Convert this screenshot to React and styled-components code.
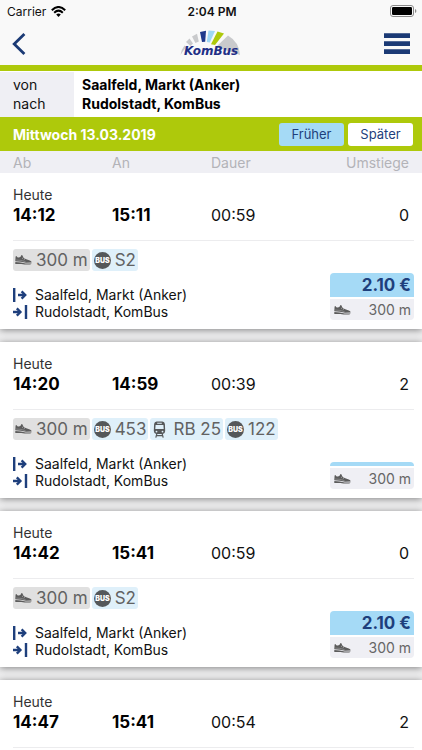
import styled, { createGlobalStyle } from 'styled-components';

const connections = [
  {
    departure: '14:12', arrival: '15:11', duration: '00:59', changes: 0, price: '2.10 €',
    legs: [{ type: 'walk', label: '300 m' }, { type: 'bus', label: 'S2' }],
  },
  {
    departure: '14:20', arrival: '14:59', duration: '00:39', changes: 2, price: '',
    legs: [
      { type: 'walk', label: '300 m' },
      { type: 'bus', label: '453' },
      { type: 'train', label: 'RB 25' },
      { type: 'bus', label: '122' },
    ],
  },
  {
    departure: '14:42', arrival: '15:41', duration: '00:59', changes: 0, price: '2.10 €',
    legs: [{ type: 'walk', label: '300 m' }, { type: 'bus', label: 'S2' }],
  },
  {
    departure: '14:47', arrival: '15:41', duration: '00:54', changes: 2, price: '',
    legs: [
      { type: 'walk', label: '300 m' },
      { type: 'bus', label: '453' },
      { type: 'train', label: 'RB 25' },
      { type: 'bus', label: '122' },
    ],
  },
];

const from = 'Saalfeld, Markt (Anker)';
const to = 'Rudolstadt, KomBus';

function ShoeIcon() {
  return (
    <svg width="17" height="10" viewBox="0 0 17 10" fill="#5c5c5c" aria-hidden="true">
      <path d="M0.6 1.4 L1.4 1 L2.4 2.2 Q4 3 5.8 1.6 L6.4 0 L7.6 0.4 L8 1.8 L9.6 3.4 L12 4.6 L14.8 5.4 Q16.6 6 16.7 7.6 L11 7.7 L6 6.7 L0.3 6.2 Z" />
      <path d="M0.3 6.9 L5.8 7.4 L10.6 8.5 L16.6 8.5 Q16.2 9.6 14.6 9.6 L9.6 9.6 L6.4 8.9 L0.3 8.9 Z" />
      <path d="M7.2 3.6 L8.6 2.4 M8.8 4.7 L10.2 3.5" stroke="#e4e4e6" strokeWidth="0.6" />
      <path d="M1.2 5 L6 5.4 L10.5 6.6" fill="none" stroke="#a8a8aa" strokeWidth="0.5" />
    </svg>
  );
}

function BusIcon() {
  return (
    <svg width="17" height="17" viewBox="0 0 17 17" aria-hidden="true">
      <circle cx="8.5" cy="8.5" r="8.5" fill="#55585a" />
      <text x="8.5" y="11" textAnchor="middle" fontSize="7" fontWeight="900" fontFamily="Inter, sans-serif" fill="#fff">BUS</text>
    </svg>
  );
}

function TrainIcon() {
  return (
    <svg width="17" height="17" viewBox="-1 0 17 17" aria-hidden="true">
      <path d="M3.6 0.5 H9.4 Q11.6 0.7 11.9 3 L12.2 10 Q12.1 12.6 9.8 12.9 H3.2 Q0.9 12.6 0.8 10 L1.1 3 Q1.4 0.7 3.6 0.5 Z" fill="#55585a" />
      <path d="M4.2 1.7 H8.8 V2.7 H4.2 Z M2.6 4 H10.4 L10.7 8 H2.3 Z" fill="#dff0fa" />
      <circle cx="3.5" cy="10.6" r="0.9" fill="#dff0fa" />
      <circle cx="9.5" cy="10.6" r="0.9" fill="#dff0fa" />
      <path d="M3.8 12.8 L2.8 16.6 M9.2 12.8 L10.2 16.6 M3.3 14.7 H9.7" stroke="#55585a" strokeWidth="1.2" />
    </svg>
  );
}

function DepartIcon() {
  return (
    <svg width="15" height="14" viewBox="0 0 15 14" fill="none" stroke="#1e3f7c" strokeWidth="2.4" aria-hidden="true">
      <path d="M1.2 0 V14 M5 7 H12" />
      <path d="M8.6 3.4 L12.2 7 L8.6 10.6" />
    </svg>
  );
}

function ArriveIcon() {
  return (
    <svg width="15" height="14" viewBox="0 0 15 14" fill="none" stroke="#1e3f7c" strokeWidth="2.4" aria-hidden="true">
      <path d="M13 0 V14 M0 7 H7" />
      <path d="M3.8 3.4 L7.4 7 L3.8 10.6" />
    </svg>
  );
}

function WifiIcon() {
  return (
    <svg width="15" height="11" viewBox="0 0 15 11" aria-hidden="true">
      <g fill="none" stroke="#000" strokeWidth="2">
        <path d="M0.8 4.2 Q7.5 -2.2 14.2 4.2" />
        <path d="M3.2 6.7 Q7.5 2.6 11.8 6.7" />
      </g>
      <path d="M5.2 8.5 Q7.5 6.5 9.8 8.5 L7.5 10.9 Z" />
    </svg>
  );
}

function BatteryIcon() {
  return (
    <svg width="27" height="12" viewBox="0 0 27 12" aria-hidden="true">
      <rect x="0.5" y="0.5" width="23" height="11" rx="2.5" fill="none" stroke="#8a8a8a" />
      <rect x="2" y="2" width="20" height="8" rx="1.2" />
      <path d="M25 4 Q26.4 4.6 26.4 6 Q26.4 7.4 25 8 Z" fill="#8a8a8a" />
    </svg>
  );
}

function Logo() {
  return (
    <svg width="62" height="28" viewBox="0 0 62 28" role="img" aria-label="KomBus">
      <path d="M0.5 25 Q1.5 19 4.5 15.5 L6.5 17 Q3.5 20 0.5 25 Z" fill="#c9cacc" />
      <path d="M6 12 L9.5 8.6 L13 13.5 L10.5 16 Z" fill="#c9cacc" />
      <path d="M12 6.6 L17 3.8 L18.8 11.4 L15.4 13 Z" fill="#c9cacc" />
      <path d="M20 2 L26 0.8 L25.2 11.8 L22 12 Z" fill="#1f3a8c" />
      <path d="M28.5 0.5 L35 1 L29.8 12.4 L26.8 12 Z" fill="#9fd8f5" />
      <path d="M37.5 1.6 L44 3.6 L35 15 L31 14.2 Z" fill="#aec90b" />
      <path d="M48 5.6 Q59 12 60 25 L36 17 Z" fill="#c9cacc" />
      <text x="4" y="25" fontFamily="'DejaVu Sans', sans-serif" fontStyle="italic" fontWeight="700" fontSize="12" fill="#1f2f86">KomBus</text>
    </svg>
  );
}

const legIcons = { walk: ShoeIcon, bus: BusIcon, train: TrainIcon };

function Connection({ departure, arrival, duration, changes, price, legs }) {
  return (
    <Card>
      <Summary>
        <Day>Heute</Day>
        <Columns>
          <Time>{departure}</Time>
          <Time>{arrival}</Time>
          <Value>{duration}</Value>
          <Value $right>{changes}</Value>
        </Columns>
      </Summary>
      <Legs>
        {legs.map((leg) => {
          const Icon = legIcons[leg.type];
          return (
            <Leg key={leg.label} $type={leg.type}>
              <Icon />
              {leg.label}
            </Leg>
          );
        })}
      </Legs>
      <Details>
        <Stations>
          <Station>
            <DepartIcon />
            {from}
          </Station>
          <Station>
            <ArriveIcon />
            {to}
          </Station>
        </Stations>
        <Fare>
          <Price $empty={!price}>{price}</Price>
          <Walk>
            <ShoeIcon />
            300 m
          </Walk>
        </Fare>
      </Details>
    </Card>
  );
}

export default function App() {
  return (
    <>
      <GlobalStyle />
      <Page>
        <StatusBar>
          <Carrier>
            Carrier
            <WifiIcon />
          </Carrier>
          <Clock>2:04 PM</Clock>
          <Battery><BatteryIcon /></Battery>
        </StatusBar>
        <NavBar>
          <IconButton aria-label="Zurück">
            <svg width="14" height="22" viewBox="0 0 14 22" fill="none" stroke="#1b3a75" strokeWidth="2.8">
              <path d="M12.4 1 L2.2 11 L12.4 21" />
            </svg>
          </IconButton>
          <Logo />
          <IconButton $right aria-label="Menü">
            <svg width="26" height="21" viewBox="0 0 26 21" fill="#1b3a75">
              <path d="M0 0.3 H26 V5 H0 Z M0 8.3 H26 V13 H0 Z M0 16.3 H26 V21 H0 Z" />
            </svg>
          </IconButton>
        </NavBar>
        <Route>
          <RouteLabel>von</RouteLabel>
          <RouteStop>{from}</RouteStop>
          <RouteLabel>nach</RouteLabel>
          <RouteStop>{to}</RouteStop>
        </Route>
        <DateBar>
          <DateTitle>Mittwoch 13.03.2019</DateTitle>
          <ShiftButton $earlier>Früher</ShiftButton>
          <ShiftButton>Später</ShiftButton>
        </DateBar>
        <ListHeader>
          <span>Ab</span>
          <span>An</span>
          <span>Dauer</span>
          <Right>Umstiege</Right>
        </ListHeader>
        <List>
          {connections.map((connection) => (
            <Connection key={connection.departure} {...connection} />
          ))}
        </List>
      </Page>
    </>
  );
}

const GlobalStyle = createGlobalStyle`
  * {
    box-sizing: border-box;
  }

  body {
    margin: 0;
    font-family: Inter, 'Liberation Sans', sans-serif;
    color: #111;
    background: #ededee;
  }

  svg {
    display: block;
    flex-shrink: 0;
  }
`;

const Page = styled.div`
  display: flex;
  flex-direction: column;
  height: 100vh;
`;

const StatusBar = styled.div`
  display: grid;
  grid-template-columns: 1fr auto 1fr;
  align-items: center;

  height: 22px;
  padding: 0 5px 0 7px;

  background: #f9f9f9;
  font-size: 12px;
`;

const Carrier = styled.div`
  display: flex;
  align-items: center;
  gap: 5px;
`;

const Clock = styled.div`
  font-weight: 600;
`;

const Battery = styled.div`
  display: flex;
  justify-content: flex-end;
`;

const NavBar = styled.header`
  display: grid;
  grid-template-columns: 1fr auto 1fr;
  align-items: center;

  height: 49px;
  padding: 0 12px;

  background: #f9f9f9;
  border-bottom: 6px solid #aec90b;
`;

const IconButton = styled.button`
  justify-self: ${({ $right }) => ($right ? 'end' : 'start')};
  padding: 0;
  border: none;
  background: none;
  cursor: pointer;
`;

const Route = styled.dl`
  display: grid;
  grid-template-columns: 74px 1fr;

  margin: 0;
  padding: 3px 0 4px;

  border-top: 1px solid #fff;
  background: linear-gradient(to right, #efeff4 74px, #fff 74px);

  font-size: 14px;
  line-height: 19px;
`;

const RouteLabel = styled.dt`
  padding-left: 13px;
`;

const RouteStop = styled.dd`
  margin: 0;
  padding-left: 8px;
  font-weight: 700;
  color: #000;
`;

const DateBar = styled.div`
  display: flex;
  align-items: center;
  gap: 4px;

  height: 34px;
  padding: 0 9px 0 13px;

  background: #aec90b;
`;

const DateTitle = styled.h1`
  flex: 1;
  margin: 0;
  font-size: 14px;
  font-weight: 700;
  color: #fff;
`;

const ShiftButton = styled.button`
  width: 65px;
  height: 23px;
  padding: 0;

  border: none;
  border-radius: 3px;

  background: ${({ $earlier }) => ($earlier ? '#a5daf6' : '#fff')};
  color: #1e3f7c;
  font-family: inherit;
  font-size: 13px;
  cursor: pointer;
`;

const Columns = styled.div`
  display: grid;
  grid-template-columns: repeat(4, 1fr);
  align-items: center;
`;

const ListHeader = styled(Columns)`
  height: 22px;
  padding: 0 13px;

  background: #efeff4;
  font-size: 14px;
  color: #b3b3b8;
`;

const Right = styled.span`
  text-align: right;
`;

const List = styled.main`
  display: flex;
  flex-direction: column;
  gap: 13px;
  flex: 1;
  min-height: 0;
  overflow-y: auto;
  scrollbar-width: none;
`;

const Card = styled.article`
  flex-shrink: 0;
  padding: 12px 8px 9px 13px;

  background: #fff;
  box-shadow: 0 1px 7px rgba(0, 0, 0, 0.45);
`;

const Summary = styled.div`
  padding: 0 5px 13px 0;
  border-bottom: 1px solid #ececee;
`;

const Day = styled.div`
  font-size: 14px;
  line-height: 19px;
  color: #333;
`;

const Time = styled.div`
  font-size: 17px;
  line-height: 23px;
  font-weight: 700;
  color: #000;
`;

const Value = styled.div`
  font-size: 16px;
  line-height: 23px;
  text-align: ${({ $right }) => ($right ? 'right' : 'left')};
`;

const Legs = styled.div`
  display: flex;
  gap: 2px;
  margin-top: 8px;
`;

const Leg = styled.span`
  display: flex;
  align-items: center;
  gap: 4px;

  height: 22px;
  padding: 0 2px;

  border-radius: 3px;
  background: ${({ $type }) => ($type === 'walk' ? '#e0e0e0' : '#dff0fa')};
  font-size: 17px;
  color: #626262;
`;

const Details = styled.div`
  display: flex;
  justify-content: space-between;
  align-items: flex-end;
  height: 49px;
`;

const Stations = styled.div`
  font-size: 14px;
  line-height: 17px;
`;

const Station = styled.div`
  display: flex;
  align-items: center;
  gap: 7px;
`;

const Fare = styled.div`
  display: flex;
  flex-direction: column;
  gap: 2px;

  width: 84px;
  border-radius: 4px;
  overflow: hidden;
`;

const Price = styled.div`
  height: ${({ $empty }) => ($empty ? '4px' : '24px')};
  padding-right: 3px;

  background: #a5daf6;
  font-size: 17px;
  line-height: 24px;
  font-weight: 700;
  text-align: right;
  color: #1e3f7c;
`;

const Walk = styled.div`
  display: flex;
  align-items: center;
  justify-content: space-between;

  height: 21px;
  padding: 0 3px 0 4px;

  background: #efeff4;
  font-size: 14px;
  color: #666;
`;
